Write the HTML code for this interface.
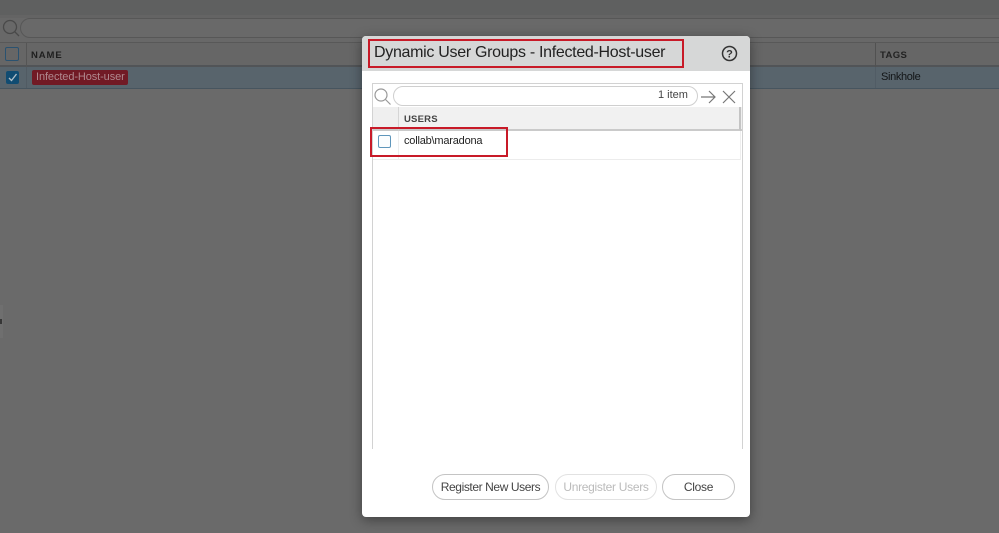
<!DOCTYPE html>
<html><head><meta charset="utf-8"><style>
html,body{margin:0;padding:0}
body{width:999px;height:533px;overflow:hidden;position:relative;background:#6a6a6a;font-family:"Liberation Sans",sans-serif;color:#333}
div,span{position:absolute;box-sizing:border-box;white-space:nowrap}
svg{position:absolute;overflow:visible}
.h{font-weight:bold;font-size:9.5px;letter-spacing:.6px;color:#2c2c2c}
.btn{border:1px solid #c4c4c4;border-radius:13px;background:#fff;height:26px;top:474px;font-size:12px;line-height:24px;text-align:center;color:#444;letter-spacing:-.3px}
</style></head><body>
<div style="left:0;top:0;width:999px;height:15px;background:#5f6060"></div>
<div style="left:0;top:15px;width:999px;height:3px;background:#646464"></div>
<div style="left:0;top:18px;width:999px;height:25px;background:#686868;border-bottom:1px solid #585858"></div>
<svg style="left:0;top:0" width="30" height="40" fill="none" stroke="#494949" stroke-width="1.3"><circle cx="10" cy="27" r="6.5"/><path d="M14.5 31.5 19 36"/></svg>
<div style="left:20px;top:18px;width:1000px;height:20px;border:1px solid #575757;border-radius:10px;background:#696969"></div>
<div style="left:0;top:43px;width:999px;height:24px;background:#666;border-bottom:2px solid #515457"></div>
<div style="left:26px;top:43px;width:1px;height:45px;background:#555"></div>
<div style="left:875px;top:43px;width:1px;height:45px;background:#515151"></div>
<div style="left:5px;top:47px;width:14px;height:14px;border:1.5px solid #2a5270;border-radius:2px"></div>
<div class="h" style="left:31px;top:50px;color:#1e1e1e;letter-spacing:.9px">NAME</div>
<div class="h" style="left:880px;top:50px;color:#222;letter-spacing:.4px">TAGS</div>
<div style="left:0;top:67px;width:999px;height:22px;background:#58646c;border-bottom:1px solid #47555f"></div>
<div style="left:26px;top:67px;width:1px;height:21px;background:#515b63"></div>
<div style="left:875px;top:67px;width:1px;height:21px;background:#515c65"></div>
<div style="left:6px;top:71px;width:13px;height:13px;background:#104c72;border-radius:2px"></div>
<svg style="left:6px;top:71px" width="13" height="13" fill="none" stroke="#b0bec7" stroke-width="1.4"><path d="M3 7 5.5 9.5 10.5 3"/></svg>
<div style="left:32px;top:70px;width:96px;height:15px;background:#711a25;border-radius:2px;color:#b0898f;font-size:11px;line-height:15px;padding-left:4px;letter-spacing:-.1px">Infected-Host-user</div>
<div style="left:881px;top:71px;font-size:11px;line-height:13px;color:#121517;letter-spacing:-.35px">Sinkhole</div>
<div style="left:0;top:305px;width:3px;height:33px;background:#6f6f6f"></div>
<div style="left:0;top:319px;width:2px;height:5px;background:#363636"></div>

<div style="left:362px;top:36px;width:388px;height:481px;background:#fff;border-radius:4px;box-shadow:0 3px 12px rgba(0,0,0,.4);overflow:hidden">
  <div style="left:0;top:0;width:388px;height:35px;background:#d6d7d7"></div>
</div>
<div style="left:374px;top:43px;font-size:16px;line-height:20px;color:#222;letter-spacing:-.3px">Dynamic User Groups - Infected-Host-user</div>
<div style="left:368px;top:39px;width:316px;height:29px;border:2px solid #c81a28"></div>
<svg style="left:721px;top:45px" width="17" height="17" fill="none" stroke="#333" stroke-width="1.5"><circle cx="8.5" cy="8.5" r="7"/><text x="8.5" y="12.5" font-size="11" font-weight="bold" text-anchor="middle" fill="#333" stroke="none" font-family="Liberation Sans">?</text></svg>

<div style="left:372px;top:83px;width:371px;height:366px;border:1px solid #d2d2d2;border-bottom:0"></div>
<svg style="left:373px;top:86px" width="20" height="20" fill="none" stroke="#999" stroke-width="1.2"><circle cx="8" cy="9" r="6"/><path d="M12.5 13.5 17.5 18.5"/></svg>
<div style="left:393px;top:86px;width:305px;height:20px;border:1px solid #cfcfcf;border-radius:10px;background:#fff"></div>
<div style="left:658px;top:89px;font-size:11px;line-height:13px;color:#444">1 item</div>
<svg style="left:700px;top:89px" width="40" height="16" fill="none" stroke="#777" stroke-width="1.2"><path d="M1 8H15M9 2 15 8 9 14"/><path d="M23 2 35 14M35 2 23 14"/></svg>
<div style="left:373px;top:107px;width:369px;height:24px;background:#efefef;border-bottom:2px solid #cacaca"></div>
<div style="left:398px;top:107px;width:343px;height:24px;background:#f1f1f1;border-left:1px solid #d5d5d5;border-right:2px solid #c4c4c4;border-bottom:2px solid #cacaca"></div>
<div class="h" style="left:404px;top:114px;color:#444;letter-spacing:.2px">USERS</div>
<div style="left:373px;top:159px;width:367px;height:1px;background:#ececec"></div>
<div style="left:398px;top:131px;width:1px;height:29px;background:#eee"></div>
<div style="left:740px;top:131px;width:1px;height:29px;background:#eee"></div>
<div style="left:378px;top:135px;width:13px;height:13px;border:1.5px solid #5f96bb;border-radius:2px;background:#fbfdfe"></div>
<div style="left:404px;top:134px;font-size:11px;line-height:14px;color:#222;letter-spacing:-.2px">collab\maradona</div>
<div style="left:370px;top:127px;width:138px;height:30px;border:2px solid #c81a28"></div>

<div class="btn" style="left:432px;width:117px;letter-spacing:-.4px">Register New Users</div>
<div class="btn" style="left:555px;width:102px;color:#bbb;border-color:#e2e2e2;font-size:12px;letter-spacing:-.3px">Unregister Users</div>
<div class="btn" style="left:662px;width:73px">Close</div>
</body></html>
